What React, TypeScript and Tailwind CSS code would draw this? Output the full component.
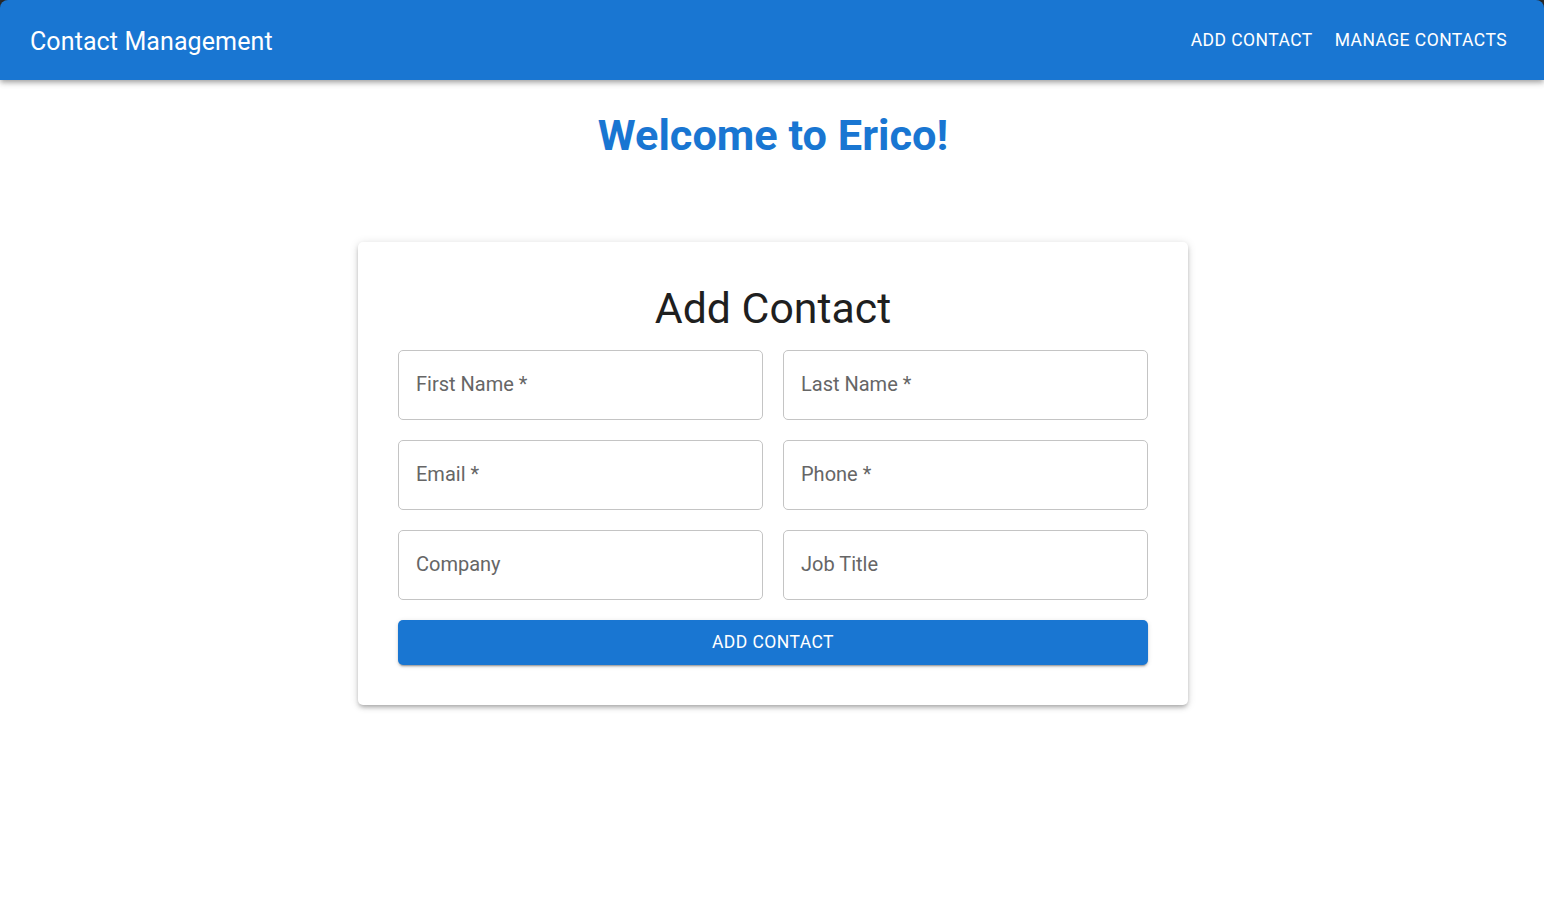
import React from 'react';

const fields = [
  { label: 'First Name', required: true },
  { label: 'Last Name', required: true },
  { label: 'Email', required: true },
  { label: 'Phone', required: true },
  { label: 'Company', required: false },
  { label: 'Job Title', required: false },
];

export default function App() {
  return (
    <div className="min-h-screen bg-white font-['Roboto',sans-serif] text-[#212121]">
      {/* App bar */}
      <div className="bg-[#2b2b2b]">
        <header className="relative z-10 h-[80px] bg-[#1976d2] rounded-t-[8px] pl-[30px] pr-[27px] flex items-center justify-between text-white shadow-[0_2px_4px_-1px_rgba(0,0,0,0.2),0_4px_5px_0_rgba(0,0,0,0.14),0_1px_10px_0_rgba(0,0,0,0.12)]">
          <h1 className="mt-[2px] text-[25px] font-normal leading-none tracking-[0.1px]">Contact Management</h1>
          <nav className="mt-[1px] flex items-center gap-[2px]">
            <a className="px-[10px] py-[8px] text-[17.5px] font-normal uppercase tracking-[0.45px] leading-none">Add Contact</a>
            <a className="px-[10px] py-[8px] text-[17.5px] font-normal uppercase tracking-[0.45px] leading-none">Manage Contacts</a>
          </nav>
        </header>
      </div>

      <main className="flex flex-col items-center pl-[2px]">
        <h2 className="mt-[30px] text-[43.3px] font-bold leading-[52.5px] text-[#1976d2]">Welcome to Erico!</h2>

        <div className="mt-[79px] w-[830px] rounded-[5px] bg-white p-[40px] shadow-[0_3px_4px_-2px_rgba(0,0,0,0.2),0_3px_5px_0_rgba(0,0,0,0.14),0_1px_10px_0_rgba(0,0,0,0.12)]">
          <h3 className="text-center text-[42.8px] font-normal leading-[52.5px] text-[#1f1f1f]">Add Contact</h3>

          <div className="mt-[16px] grid grid-cols-2 gap-[20px]">
            {fields.map((f) => (
              <div
                key={f.label}
                className="h-[70px] rounded-[5px] border border-[#c4c4c4] flex items-center px-[17px] pb-[2px] text-[20px] text-[#666666]"
              >
                {f.label}
                {f.required && <span className="ml-[5px]">*</span>}
              </div>
            ))}
          </div>

          <button className="mt-[20px] h-[45px] w-full rounded-[5px] bg-[#1976d2] pb-[1px] text-[17.5px] font-normal uppercase tracking-[0.45px] text-white shadow-[0_3px_1px_-2px_rgba(0,0,0,0.2),0_2px_2px_0_rgba(0,0,0,0.14),0_1px_5px_0_rgba(0,0,0,0.12)]">
            Add Contact
          </button>
        </div>
      </main>
    </div>
  );
}
